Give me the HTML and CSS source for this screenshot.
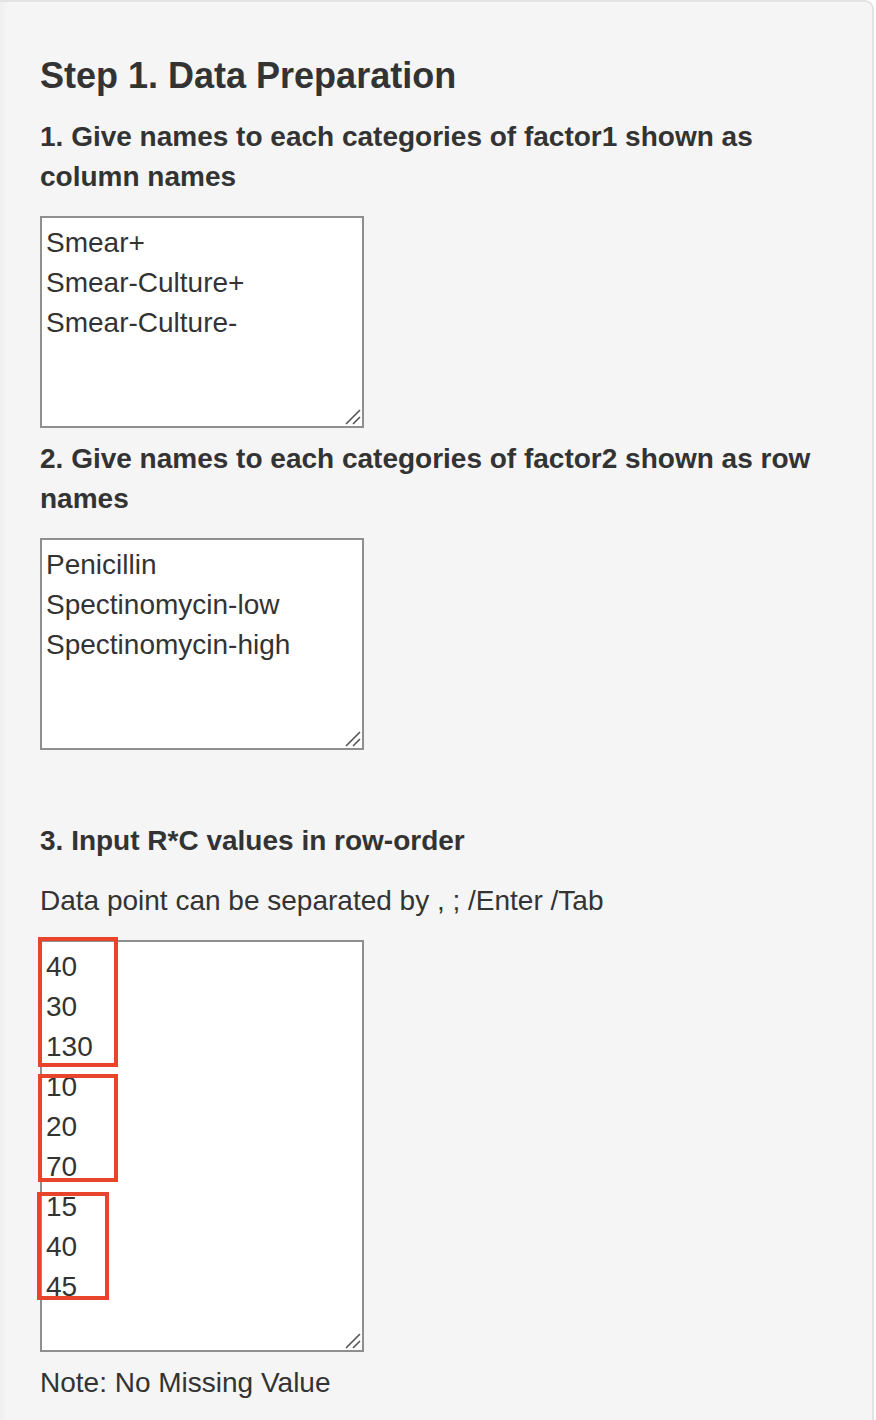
FILE: index.html
```html
<!DOCTYPE html>
<html lang="en">
<head>
<meta charset="utf-8">
<title>Step 1. Data Preparation</title>
<link rel="stylesheet" href="styles.css">
</head>
<body>
<div class="well">
  <h3 class="title">Step 1. Data Preparation</h3>

  <label class="field-label" for="cn">1. Give names to each categories of factor1 shown as column names</label>
  <div class="field">
    <textarea id="cn" class="box box-5">Smear+
Smear-Culture+
Smear-Culture-</textarea>
    <svg class="grip" width="18" height="18" viewBox="0 0 18 18" aria-hidden="true"><path d="M2 16 L16 2 M9 16 L16 9" stroke="#555" stroke-width="1.6" fill="none"/></svg>
  </div>

  <label class="field-label" for="rn">2. Give names to each categories of factor2 shown as row names</label>
  <div class="field">
    <textarea id="rn" class="box box-5">Penicillin
Spectinomycin-low
Spectinomycin-high</textarea>
    <svg class="grip" width="18" height="18" viewBox="0 0 18 18" aria-hidden="true"><path d="M2 16 L16 2 M9 16 L16 9" stroke="#555" stroke-width="1.6" fill="none"/></svg>
  </div>

  <label class="field-label section-gap" for="vals">3. Input R*C values in row-order</label>
  <p class="hint">Data point can be separated by , ; /Enter /Tab</p>
  <div class="field">
    <textarea id="vals" class="box box-10">40
30
130
10
20
70
15
40
45</textarea>
    <svg class="grip" width="18" height="18" viewBox="0 0 18 18" aria-hidden="true"><path d="M2 16 L16 2 M9 16 L16 9" stroke="#555" stroke-width="1.6" fill="none"/></svg>
    <span class="mark mark-1"></span>
    <span class="mark mark-2"></span>
    <span class="mark mark-3"></span>
  </div>
  <p class="note">Note: No Missing Value</p>
</div>
</body>
</html>
```

FILE: styles.css
```css
html, body {
  margin: 0;
  padding: 0;
  background: #ffffff;
}

body {
  font-family: "Liberation Sans", Arial, Helvetica, sans-serif;
  color: #333333;
  font-size: 28px;
  line-height: 40px;
}

.well {
  width: 874px;
  min-height: 1440px;
  box-sizing: border-box;
  background: #f5f5f5;
  border-top: 2px solid #e3e3e3;
  border-right: 2px solid #e3e3e3;
  border-radius: 0 9px 0 0;
  box-shadow: inset 8px 0 10px -8px rgba(0, 0, 0, 0.06);
  padding: 54px 40px 40px 40px;
}

.title {
  margin: 0 0 21px 0;
  font-size: 36px;
  line-height: 40px;
  font-weight: 700;
  color: #333333;
}

.field-label {
  display: block;
  font-weight: 700;
  font-size: 28px;
  line-height: 40px;
  margin: 0 0 19px 0;
}

.section-gap {
  margin-top: 71px;
  margin-bottom: 20px;
}

.hint {
  margin: 0 0 19px 0;
}

.field {
  position: relative;
  width: 324px;
  margin: 0 0 11px 0;
}

.box {
  display: block;
  box-sizing: border-box;
  width: 324px;
  margin: 0;
  padding: 5px 4px 3px 4px;
  border: 2px solid #8f8f8f;
  border-radius: 0;
  background: #ffffff;
  color: #333333;
  font-family: "Liberation Sans", Arial, Helvetica, sans-serif;
  font-size: 28px;
  line-height: 40px;
  outline: none;
  resize: none;
}

.box-5 {
  height: 212px;
}

.box-10 {
  height: 412px;
}

.grip {
  position: absolute;
  right: 2px;
  bottom: 2px;
  pointer-events: none;
}

.mark {
  position: absolute;
  box-sizing: border-box;
  border: 4px solid #e8442c;
  pointer-events: none;
}

.mark-1 {
  left: -2px;
  top: -3px;
  width: 80px;
  height: 130px;
}

.mark-2 {
  left: -2px;
  top: 134px;
  width: 80px;
  height: 108px;
}

.mark-3 {
  left: -3px;
  top: 252px;
  width: 72px;
  height: 108px;
}

.note {
  margin: 1px 0 0 0;
}
```
